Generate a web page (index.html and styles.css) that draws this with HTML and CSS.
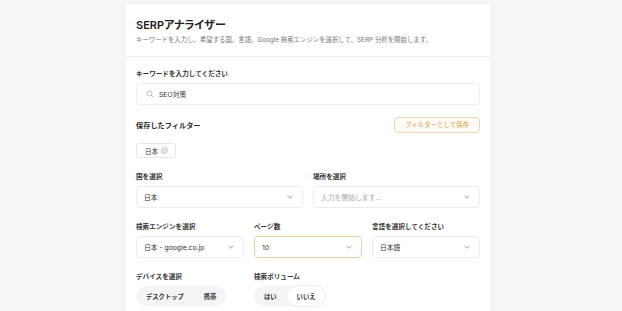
FILE: index.html
```html
<!DOCTYPE html>
<html>
	<head>
		<meta charset="UTF-8">
		<title>SERPアナライザー</title>
		<link rel="stylesheet" href="styles.css">
	</head>
	<body>
		<div class="card">
			<div class="card-head">
				<h1 class="title">SERPアナライザー</h1>
				<p class="desc">キーワードを入力し、希望する国、言語、Google 検索エンジンを選択して、SERP 分析を開始します。</p>
			</div>
			<div class="card-body">
				<div class="label">キーワードを入力してください</div>
				<div class="field search">
					<svg class="icon-search" width="8" height="8" viewBox="0 0 16 16"><circle cx="7" cy="7" r="5.2" fill="none" stroke="#a0a0a0" stroke-width="1.4"/><path d="M11 11l3.5 3.5" stroke="#a0a0a0" stroke-width="1.4" stroke-linecap="round"/></svg>
					<span>SEO対策</span>
				</div>

				<div class="saved-row">
					<div class="saved-title">保存したフィルター</div>
					<a href="javascript:" class="btn-save">フィルターとして保存</a>
				</div>
				<div class="chips">
					<span class="chip">日本 <svg width="7" height="7" viewBox="0 0 12 12"><circle cx="6" cy="6" r="5" fill="none" stroke="#888" stroke-width="1"/><path d="M4.3 4.3l3.4 3.4M7.7 4.3l-3.4 3.4" stroke="#888" stroke-width="1"/></svg></span>
				</div>

				<div class="row two">
					<div class="col">
						<div class="label">国を選択</div>
						<div class="field select"><span>日本</span><i class="arrow"></i></div>
					</div>
					<div class="col">
						<div class="label">場所を選択</div>
						<div class="field select"><span class="placeholder">入力を開始します...</span><i class="arrow"></i></div>
					</div>
				</div>

				<div class="row three">
					<div class="col">
						<div class="label">検索エンジンを選択</div>
						<div class="field select"><span>日本 - google.co.jp</span><i class="arrow"></i></div>
					</div>
					<div class="col">
						<div class="label">ページ数</div>
						<div class="field select focus"><span>10</span><i class="arrow"></i></div>
					</div>
					<div class="col">
						<div class="label">言語を選択してください</div>
						<div class="field select"><span>日本語</span><i class="arrow"></i></div>
					</div>
				</div>

				<div class="row three">
					<div class="col">
						<div class="label">デバイスを選択</div>
						<div class="toggle"><span>デスクトップ</span><span>携帯</span></div>
					</div>
					<div class="col">
						<div class="label">検索ボリューム</div>
						<div class="toggle"><span>はい</span><span class="on">いいえ</span></div>
					</div>
					<div class="col"></div>
				</div>
			</div>
		</div>
	</body>
</html>
```

FILE: styles.css
```css
body{ margin: 0; padding: 3px 0 0 124px; background-color: #f6f6f6; font-family: Inter, "Noto Sans CJK JP", sans-serif; color: #222;}
.card{ width: 368px; background-color: #fff; border: 1px solid #efefef; border-bottom: none; box-sizing: border-box;}
.card-head{ padding: 13px 11px 11px; border-bottom: 1px solid #ededed;}
.title{ margin: 0; font-size: 11px; line-height: 16px; font-weight: 600; color: #1e1e1e; font-feature-settings: "palt";}
.desc{ margin: 2px 0 0; font-size: 6.4px; line-height: 10px; color: #777;}
.card-body{ padding: 10px 11px 10px;}
.label{ padding-top: 2px; font-size: 6.6px; line-height: 10px; font-weight: 600; color: #333; margin-bottom: 4px;}
.field{ height: 22px; border: 1px solid #ececec; border-radius: 4px; box-sizing: border-box; display: flex; align-items: center; padding: 0 10px 0 7px; font-size: 6.8px; color: #333;}
.search{ gap: 5px; padding-left: 9px;}
.icon-search{ display: block;}
.saved-row{ display: flex; justify-content: space-between; align-items: center; margin-top: 12px;}
.saved-title{ font-size: 7.2px; font-weight: 700; color: #2a2a2a;}
.btn-save{ display: block; width: 86px; height: 16px; line-height: 14px; box-sizing: border-box; border: 1px solid #eed7b2; border-radius: 4px; text-align: center; text-decoration: none; font-size: 6.4px; color: #dc9a3a; background-color: #fffcf7;}
.chips{ margin-top: 10px; display: flex;}
.chip{ display: flex; align-items: center; gap: 3px; height: 15px; padding: 0 7px 0 8px; border: 1px solid #e6e6e6; border-radius: 3px; box-sizing: border-box; font-size: 6.6px; color: #333;}
.row{ display: grid; margin-top: 12px;}
.row.two{ grid-template-columns: 1fr 1fr; gap: 10px;}
.row.three{ grid-template-columns: 1fr 1fr 1fr; gap: 10px;}
.select{ justify-content: space-between;}
.placeholder{ color: #aaa;}
.focus{ border-color: #e6d0a4;}
.arrow{ width: 3px; height: 3px; border-right: 1px solid #bbb; border-bottom: 1px solid #bbb; transform: rotate(45deg); margin-top: -2px;}
.toggle{ display: flex; width: fit-content; height: 20px; border-radius: 10px; background-color: #f4f4f6; font-size: 6.3px; font-weight: 600; color: #333;}
.toggle span{ display: flex; align-items: center; padding: 0 10px; border-radius: 10px;}
.toggle span.on{ background-color: #fff; box-shadow: 0 0 0 1px #f0f0f2;}
```
